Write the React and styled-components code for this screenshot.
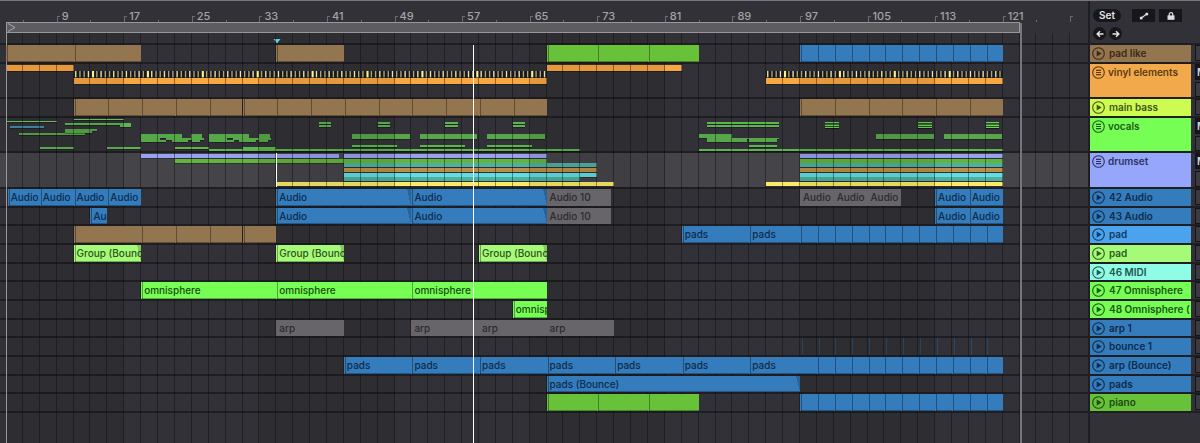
import React from "react";
import styled, { createGlobalStyle } from "styled-components";

const FIRST_BAR = 3;
const BAR_SPAN = 128.1;

const place = (from, to) => ({
  left: `${((from - FIRST_BAR) / BAR_SPAN) * 100}%`,
  width: to === undefined ? undefined : `${((to - from) / BAR_SPAN) * 100}%`,
});

const range = (from, to, step) => {
  const list = [];
  for (let bar = from; bar < to; bar += step) list.push(bar);
  return list;
};

// [from, to, color, name]
const run = (from, to, step, color, name) =>
  range(from, to, step).map((bar) => [bar, bar + step, color, name]);

const colors = {
  tan: "#93754f",
  green: "#67c139",
  blue: "#357cbd",
  grey: "#67656a",
  lime: "#a5fb78",
  neon: "#77fe55",
};

const inks = {
  blue: "#0d2b4b",
  grey: "#2b2a2f",
  lime: "#2f5220",
  neon: "#194d12",
};

const orange = "#f9a740";
const leaf = "#56a749";
const thin = "#5cb64d";
const bright = "#6fd05c";

// strips inside folded groups: [from, to, top, height, color]
const vinylStrips = [
  [3, 11, 1, 6, orange],
  [67, 83, 1, 6, orange],
  [11, 67, 14, 6, orange],
  [93, 121, 14, 6, orange],
];

const phrase = (bar) => [
  [bar, bar + 4.8, 16, 4, leaf],
  [bar + 5.9, bar + 7.2, 16, 4, leaf],
  [bar, bar + 2.2, 20, 2, leaf],
  [bar + 2.9, bar + 7.4, 20, 2, leaf],
  [bar, bar + 3, 22, 2, leaf],
  [bar + 3.6, bar + 5.6, 22, 2, leaf],
  [bar + 6, bar + 7, 22, 2, leaf],
];

const vocalStrips = [
  [3, 9, 3, 1, bright],
  [3.5, 7.5, 8, 2, "#3f8ba6"],
  [4.5, 12.3, 15, 2, leaf],
  [10, 17.8, 5, 2, thin],
  [11, 17, 1, 1, bright],
  [16.5, 17.8, 7, 2, thin],
  [10, 13.8, 11, 2, leaf],
  [10, 13.2, 13, 2, leaf],
  [7, 11, 29, 2, thin],
  [15, 19, 29, 2, thin],
  ...phrase(19),
  ...phrase(27),
  [23, 27, 29, 2, thin],
  [31, 35, 29, 2, thin],
  [27, 71, 31, 2, thin],
  ...[40, 47, 55, 63].flatMap((bar) => [
    [bar, bar + 1.5, 4, 2, thin],
    [bar, bar + 1.5, 7, 2, thin],
  ]),
  ...[44, 52, 60].flatMap((bar) => [
    [bar, bar + 6.8, 16, 5, leaf],
    [bar, bar + 5.3, 27, 2, thin],
  ]),
  [86, 94.5, 4, 2, thin],
  [86, 94.5, 7, 2, thin],
  [85, 89, 16, 4, leaf],
  [86, 90.7, 20, 4, leaf],
  [90.7, 94.5, 20, 1, leaf],
  [91, 94.3, 21, 3, leaf],
  [91, 94.3, 27, 2, thin],
  [85, 121, 31, 2, thin],
  ...[100, 111, 119].flatMap((bar) => [
    [bar, bar + 1.6, 4, 6, "#37762f"],
    [bar, bar + 1.6, 4, 1, bright],
    [bar, bar + 1.6, 7, 1, bright],
    [bar, bar + 1.6, 9, 1, bright],
  ]),
  [106, 112.9, 16, 5, leaf],
  [114, 120.9, 16, 5, leaf],
];

const drumStrips = [
  [19, 42.4, 1, 4, "#98a0f0"],
  [43, 67, 1, 4, "#98a0f0"],
  [97, 121, 1, 4, "#98a0f0"],
  [23, 67, 6, 4, "#62b53c"],
  [97, 121, 6, 4, "#62b53c"],
  [43, 73, 10, 4, "#4fb0a1"],
  [97, 121, 10, 4, "#4fb0a1"],
  [43, 73, 15, 4, "#bd8f46"],
  [97, 121, 15, 4, "#bd8f46"],
  [43, 73, 20, 4, "#63dde4"],
  [97, 121, 20, 4, "#63dde4"],
  [43, 71, 24, 4, "#4fb0a1"],
  [97, 121, 24, 4, "#4fb0a1"],
  [35, 75, 29, 4, "#faea68"],
  [93, 121, 29, 4, "#faea68"],
];

const tracks = [
  {
    name: "pad like",
    color: "#93754f",
    ink: "#3a2a17",
    size: 19,
    clips: [
      ...run(3, 19, 8, "tan"),
      [35, 43, "tan"],
      ...run(67, 85, 6, "green"),
      ...run(97, 121, 2, "blue"),
    ],
  },
  {
    name: "vinyl elements",
    color: "#f2a94b",
    ink: "#5c3a10",
    size: 35,
    group: true,
    strips: vinylStrips,
    hits: [
      [11, 67],
      [93, 121],
    ],
  },
  {
    name: "main bass",
    color: "#cdfb4f",
    ink: "#43551a",
    size: 19,
    clips: [...run(11, 67, 4, "tan"), ...run(97, 121, 4, "tan")],
  },
  {
    name: "vocals",
    color: "#77fe55",
    ink: "#225a17",
    size: 35,
    group: true,
    strips: vocalStrips,
  },
  {
    name: "drumset",
    color: "#96a6fb",
    ink: "#2b3262",
    size: 36,
    group: true,
    selected: true,
    strips: drumStrips,
  },
  {
    name: "42 Audio",
    color: "#357cbd",
    ink: "#0d2b4b",
    size: 19,
    clips: [
      [3.2, 7, "blue", "Audio"],
      ...run(7, 19, 4, "blue", "Audio"),
      [35, 51, "blue", "Audio", true],
      [51, 67, "blue", "Audio", true],
      [67, 74.6, "grey", "Audio 10"],
      ...run(97, 109, 4, "grey", "Audio"),
      ...run(113, 121, 4, "blue", "Audio"),
    ],
  },
  {
    name: "43 Audio",
    color: "#357cbd",
    ink: "#0d2b4b",
    size: 18,
    clips: [
      [13, 15, "blue", "Audio"],
      [35, 51, "blue", "Audio", true],
      [51, 67, "blue", "Audio", true],
      [67, 74.6, "grey", "Audio 10"],
      ...run(113, 121, 4, "blue", "Audio"),
    ],
  },
  {
    name: "pad",
    color: "#4aa3ec",
    ink: "#103a63",
    size: 19,
    clips: [
      [11, 19, "tan"],
      ...run(19, 35, 4, "tan"),
      [83, 91, "blue", "pads"],
      [91, 97, "blue", "pads"],
      ...run(97, 121, 2, "blue"),
    ],
  },
  {
    name: "pad",
    color: "#a5fb78",
    ink: "#2f5a20",
    size: 19,
    clips: [
      [11, 19, "lime", "Group (Bounce)", true],
      [35, 43, "lime", "Group (Bounce)", true],
      [59, 67, "lime", "Group (Bounce)", true],
    ],
  },
  { name: "46 MIDI", color: "#8ffde6", ink: "#23564d", size: 18 },
  {
    name: "47 Omnisphere",
    color: "#77fe55",
    ink: "#1c5713",
    size: 19,
    clips: run(19, 67, 16, "neon", "omnisphere"),
  },
  {
    name: "48 Omnisphere (",
    color: "#77fe55",
    ink: "#1c5713",
    size: 19,
    clips: [[63, 67, "neon", "omnisphere"]],
  },
  {
    name: "arp 1",
    color: "#357cbd",
    ink: "#0d2b4b",
    size: 18,
    clips: [[35, 43, "grey", "arp"], ...run(51, 75, 8, "grey", "arp")],
  },
  {
    name: "bounce 1",
    color: "#357cbd",
    ink: "#0d2b4b",
    size: 19,
    strips: range(97, 121, 2).map((bar) => [
      bar + 0.2,
      bar + 0.3,
      0,
      17,
      "#244a70",
    ]),
  },
  {
    name: "arp (Bounce)",
    color: "#357cbd",
    ink: "#0d2b4b",
    size: 19,
    clips: [...run(43, 99, 8, "blue", "pads"), ...run(99, 121, 2, "blue")],
  },
  {
    name: "pads",
    color: "#357cbd",
    ink: "#0d2b4b",
    size: 18,
    clips: [[67, 97, "blue", "pads (Bounce)", true]],
  },
  {
    name: "piano",
    color: "#67c139",
    ink: "#1d4a10",
    size: 19,
    clips: [...run(67, 85, 6, "green"), ...run(97, 121, 2, "blue")],
  },
];

const Hits = ({ from, to }) => (
  <HitStrip
    style={place(from, to)}
    viewBox={`0 0 ${(to - from) * 8} 7`}
    preserveAspectRatio="none"
    aria-hidden="true"
  >
    <rect width="100%" height="7" fill="#19181b" />
    {range(0, (to - from) * 2, 1).map((i) => (
      <rect
        key={i}
        x={i * 4 + 1}
        width={i % 13 === 4 ? 2 : 1.3}
        height="6.4"
        fill={i % 13 === 4 ? "#fff38a" : i % 3 ? "#a8a57c" : "#e8e4ae"}
      />
    ))}
  </HitStrip>
);

const TrackIcon = ({ group }) => (
  <svg width="13" height="13" viewBox="0 0 13 13" fill="none" aria-hidden="true">
    <circle cx="6.5" cy="6.5" r="5.8" stroke="currentColor" strokeWidth="1.1" />
    {group ? (
      <path d="M4 4.4h5M4 6.5h5M4 8.6h5" stroke="currentColor" strokeWidth="1.1" />
    ) : (
      <path d="M4.7 3.4v6.2L9.7 6.5z" fill="currentColor" />
    )}
  </svg>
);

const Arrow = ({ flip }) => (
  <svg width="8" height="8" viewBox="0 0 8 8" fill="none" aria-hidden="true">
    <path
      d={flip ? "M0.5 4h6M4 1.2L6.8 4 4 6.8" : "M7.5 4h-6M4 1.2L1.2 4 4 6.8"}
      stroke="#e4e4e6"
      strokeWidth="1.5"
    />
  </svg>
);

const App = () => {
  return (
    <>
      <GlobalStyle />
      <Page>
        <Timeline>
          <Ruler>
            <Scale>
              {range(5, 131, 4).map((bar) => (
                <Tick key={bar} $major={bar % 8 === 1} style={place(bar)}>
                  {bar % 8 === 1 && bar < 129 && <span>{bar}</span>}
                </Tick>
              ))}
            </Scale>
          </Ruler>
          <LoopRow>
            <Scale>
              <Loop style={place(3, 123)}>
                <svg width="9" height="9" viewBox="0 0 9 9" aria-hidden="true">
                  <path d="M1 0.5L8 4.5 1 8.5" fill="none" stroke="#a9a9ad" />
                </svg>
              </Loop>
            </Scale>
          </LoopRow>
          <ScrubRow>
            <Scale>
              <Locator style={place(35)} width="8" height="5" viewBox="0 0 8 5">
                <path d="M0.5 0h7L4 4.5z" fill="#6bdcf6" />
              </Locator>
            </Scale>
          </ScrubRow>

          <Lanes>
            {tracks.map((track, i) => (
              <Lane key={i} $size={track.size} $selected={track.selected}>
                <Scale>
                  {(track.strips || []).map(([from, to, top, height, color], n) => (
                    <Strip
                      key={n}
                      $top={top}
                      $height={height}
                      $color={color}
                      style={place(from, to)}
                    />
                  ))}
                  {(track.hits || []).map(([from, to]) => (
                    <Hits key={from} from={from} to={to} />
                  ))}
                  {(track.clips || []).map(([from, to, color, name, fade]) => (
                    <Clip
                      key={from}
                      $color={colors[color]}
                      $ink={inks[color]}
                      $fade={fade}
                      $flat={color === "grey"}
                      style={place(from, to)}
                    >
                      {name}
                    </Clip>
                  ))}
                  {track.selected && <Insert style={place(35)} />}
                </Scale>
              </Lane>
            ))}
            <Playhead>
              <PlayLine style={place(58.3)} />
            </Playhead>
          </Lanes>

          <Grid>
            {range(3, 129, 2).map((bar) => (
              <GridCell
                key={bar}
                $dark={Math.floor((bar - 1) / 16) % 2 === 0}
                style={place(bar, bar + 2)}
              />
            ))}
            <LoopStart style={place(3)} />
            <LoopEnd style={place(123)} />
          </Grid>
        </Timeline>

        <Panel>
          <Tools>
            <ToolRow>
              <SetButton type="button">Set</SetButton>
              <ToolButton type="button" aria-label="Automation">
                <svg width="10" height="8" viewBox="0 0 10 8" aria-hidden="true">
                  <path d="M2 6.2L8 1.8" stroke="#dedee0" strokeWidth="1.2" />
                  <circle cx="2.2" cy="6" r="1.5" fill="#dedee0" />
                  <circle cx="7.8" cy="2" r="1.5" fill="#dedee0" />
                </svg>
              </ToolButton>
              <ToolButton type="button" aria-label="Lock">
                <svg width="8" height="8" viewBox="0 0 8 8" aria-hidden="true">
                  <path
                    d="M2.2 4V2.4a1.8 1.8 0 013.6 0V4"
                    fill="none"
                    stroke="#dedee0"
                    strokeWidth="1.2"
                  />
                  <rect x="0.5" y="3.4" width="7" height="4.4" fill="#dedee0" />
                </svg>
              </ToolButton>
            </ToolRow>
            <NavRow>
              <NavButton type="button" aria-label="Previous locator">
                <Arrow />
              </NavButton>
              <NavButton type="button" aria-label="Next locator">
                <Arrow flip />
              </NavButton>
            </NavRow>
          </Tools>
          {tracks.map((track, i) => (
            <TrackRow key={i} $size={track.size}>
              <TrackTitle
                type="button"
                $color={track.color}
                $ink={track.ink}
                $group={track.group}
              >
                <TrackIcon group={track.group} />
                <span>{track.name}</span>
              </TrackTitle>
              <Slots>
                <Slot $dark={track.group}>{track.group && "M"}</Slot>
                {track.group && <Slot />}
              </Slots>
            </TrackRow>
          ))}
        </Panel>
      </Page>
    </>
  );
};

const GlobalStyle = createGlobalStyle`
  * {
    box-sizing: border-box;
  }

  body {
    margin: 0;
    background: #323137;
    font-family: Inter, "Liberation Sans", sans-serif;
    font-size: 10px;
  }

  button {
    border: 0;
    padding: 0;
    font: inherit;
    cursor: pointer;
  }
`;

const Page = styled.main`
  display: flex;
  min-height: 100vh;
  border-top: 1px solid #77797c;
  overflow: hidden;
`;

const Timeline = styled.section`
  position: relative;
  flex: 1;
  min-width: 0;
  overflow: hidden;
`;

const Scale = styled.div`
  position: relative;
  height: 100%;
  margin-left: 6px;
`;

const Ruler = styled.div`
  height: 21px;
`;

const Tick = styled.div`
  position: absolute;
  bottom: 0;
  width: 3px;
  height: ${(props) => (props.$major ? 6 : 2)}px;
  border-left: 1px solid #6c6b70;
  border-top: ${(props) => (props.$major ? "1px solid #6c6b70" : "0")};

  span {
    position: absolute;
    left: 4px;
    bottom: 0;
    color: #a3a3a7;
    font-size: 11px;
    font-weight: 500;
    line-height: 12px;
  }
`;

const LoopRow = styled.div`
  height: 11px;
`;

const Loop = styled.div`
  position: absolute;
  display: flex;
  align-items: center;
  height: 11px;
  background: #5d5c61;
  border: 1px solid #98979c;
`;

const ScrubRow = styled.div`
  height: 12px;
  border-bottom: 2px solid #1f1e23;
`;

const Locator = styled.svg`
  position: absolute;
  top: 6px;
  margin-left: -3px;
`;

const Lanes = styled.div`
  position: relative;
`;

const Lane = styled.div`
  height: ${(props) => props.$size}px;
  border-bottom: 2px solid #1f1e23;
  background: ${(props) => (props.$selected ? "#454449" : "transparent")};
`;

const Strip = styled.div`
  position: absolute;
  top: ${(props) => props.$top}px;
  height: ${(props) => props.$height}px;
  min-width: 1px;
  background: ${(props) => props.$color};
  box-shadow: 0 1px 0 rgba(0, 0, 0, 0.3);
`;

const HitStrip = styled.svg`
  position: absolute;
  top: 7px;
  height: 7px;
  z-index: 2;
`;

const Clip = styled.div`
  position: absolute;
  z-index: 2;
  top: 0;
  height: 100%;
  padding-left: 2px;
  overflow: hidden;
  white-space: nowrap;
  font-weight: 500;
  line-height: 17px;
  color: ${(props) => props.$ink};
  background: ${(props) =>
      props.$fade
        ? "linear-gradient(to bottom left, rgba(0, 0, 0, 0.2) 50%, transparent 50%) top right / 4px 100% no-repeat,"
        : ""}
    ${(props) => props.$color};
  box-shadow: ${(props) =>
    props.$flat
      ? "none"
      : "inset 1px 0 0 rgba(0, 0, 0, 0.35), inset 0 -1px 0 rgba(0, 0, 0, 0.3)"};
  border-left: 1px solid transparent;
`;

const Insert = styled.div`
  position: absolute;
  z-index: 3;
  top: 0;
  height: 100%;
  border-left: 1px solid #ffffff;
`;

const Playhead = styled.div`
  position: absolute;
  z-index: 3;
  top: 0;
  left: 6px;
  right: 0;
  height: 100vh;
  pointer-events: none;
`;

const PlayLine = styled.div`
  position: absolute;
  height: 100%;
  border-left: 1px solid #ffffff;
`;

const Grid = styled.div`
  position: absolute;
  z-index: 1;
  top: 32px;
  left: 6px;
  right: 0;
  bottom: 0;
  pointer-events: none;
`;

const GridCell = styled.div`
  position: absolute;
  top: 0;
  bottom: 0;
  border-right: 1px solid rgba(10, 9, 14, 0.42);
  background: ${(props) => (props.$dark ? "rgba(0, 0, 0, 0.08)" : "transparent")};
`;

const LoopStart = styled.div`
  position: absolute;
  top: -10px;
  bottom: 0;
  border-left: 1px solid #98979c;
`;

const LoopEnd = styled.div`
  position: absolute;
  top: -10px;
  bottom: 0;
  border-left: 2px solid #77767b;
`;

const Panel = styled.aside`
  width: 112px;
  overflow: hidden;
  border-left: 2px solid #1f1e23;
`;

const Tools = styled.div`
  display: flex;
  flex-direction: column;
  gap: 5px;
  height: 44px;
  padding: 8px 0 0 3px;
  border-bottom: 2px solid #1f1e23;
`;

const ToolRow = styled.div`
  display: flex;
  gap: 4px;
`;

const SetButton = styled.button`
  width: 28px;
  height: 13px;
  margin-right: 7px;
  border-radius: 7px;
  background: #17161a;
  color: #e4e4e6;
  font-weight: 600;
  line-height: 13px;
`;

const ToolButton = styled.button`
  display: flex;
  align-items: center;
  justify-content: center;
  width: 23px;
  height: 13px;
  background: #17161a;
`;

const NavRow = styled.div`
  display: flex;
  gap: 3px;
`;

const NavButton = styled.button`
  display: flex;
  align-items: center;
  justify-content: center;
  width: 13px;
  height: 13px;
  border-radius: 50%;
  background: #17161a;
`;

const TrackRow = styled.div`
  display: flex;
  gap: 4px;
  height: ${(props) => props.$size}px;
  border-bottom: 2px solid #1f1e23;
`;

const TrackTitle = styled.button`
  display: flex;
  align-items: flex-start;
  gap: ${(props) => (props.$group ? 3 : 4)}px;
  flex: 0 0 101px;
  padding: 2px 0 0 2px;
  overflow: hidden;
  white-space: nowrap;
  text-align: left;
  font-weight: 600;
  line-height: 13px;
  color: ${(props) => props.$ink};
  background: ${(props) => props.$color};

  svg {
    flex: none;
  }
`;

const Slots = styled.div`
  display: flex;
  flex-direction: column;
  gap: 2px;
`;

const Slot = styled.div`
  width: 20px;
  height: 16px;
  padding-left: 1px;
  border: 1px solid #131216;
  background: ${(props) => (props.$dark ? "#17161a" : "#3b3a40")};
  color: #d6d6d8;
  font-weight: 600;
  line-height: 14px;
`;

export default App;
